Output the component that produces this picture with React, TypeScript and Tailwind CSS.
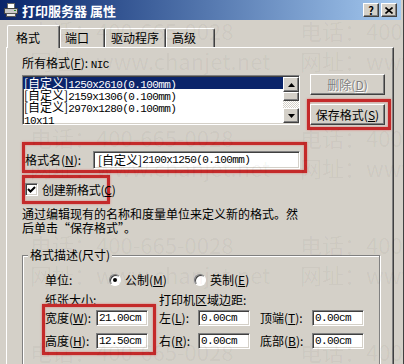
import React from 'react';

const raised =
  'border border-t-white border-l-white border-b-[#404040] border-r-[#404040] shadow-[inset_-1px_-1px_0_#808080,inset_1px_1px_0_#d4d0c8] bg-[#d4d0c8]';
const sunken =
  'border border-t-[#808080] border-l-[#808080] border-b-white border-r-white shadow-[inset_1px_1px_0_#404040,inset_-1px_-1px_0_#d4d0c8] bg-white';
const redBox = 'border-[3px] border-[#c42a2a] shadow-[0_0_2px_rgba(230,80,80,0.7),inset_0_0_2px_rgba(230,80,80,0.7)]';

// half-width latin run, 6px per char like the dialog's bitmap font
const M = ({ children }: { children: React.ReactNode }) => (
  <span className="font-['Liberation_Mono',monospace] text-[11px] tracking-[-0.6px]">{children}</span>
);

// label text with an underlined access key, e.g. 格式名(N)
const Label = ({ text, k, colon }: { text: string; k: string; colon?: boolean }) => (
  <span className="whitespace-nowrap">
    {text}(<span className="underline underline-offset-[1px]">{k}</span>){colon ? ':' : ''}
  </span>
);

const PrinterIcon = () => (
  <svg width="16" height="16" viewBox="0 0 16 16">
    <rect x="4.5" y="1.5" width="7" height="5" fill="#fff" stroke="#666" />
    <rect x="1.5" y="6.5" width="13" height="5" fill="#c8c8c8" stroke="#444" />
    <rect x="3.5" y="11.5" width="9" height="3" fill="#e8e8e8" stroke="#555" />
    <rect x="11" y="8" width="2" height="1" fill="#2a8a2a" />
  </svg>
);

const Field = ({ value }: { value: string }) => (
  <div className={`${sunken} w-[52px] h-[16px] flex items-center pl-[2px] leading-[12px]`}>
    <M>{value}</M>
  </div>
);

const Radio = ({ on }: { on?: boolean }) => (
  <span className="w-[12px] h-[12px] rounded-full border border-t-[#808080] border-l-[#808080] border-b-white border-r-white bg-white shadow-[inset_1px_1px_0_#404040] flex items-center justify-center">
    {on && <span className="w-[4px] h-[4px] rounded-full bg-black" />}
  </span>
);

const Arrow = ({ up }: { up?: boolean }) => (
  <div className={`${raised} h-[15px] flex items-center justify-center`}>
    <svg width="7" height="4" viewBox="0 0 7 4">
      <polygon points={up ? '3.5,0 7,4 0,4' : '0,0 7,0 3.5,4'} fill="#000" />
    </svg>
  </div>
);

const rows = [
  { name: '[自定义]', size: '1250x2610(0.100mm)' },
  { name: '[自定义]', size: '2159x1306(0.100mm)' },
  { name: '[自定义]', size: '2970x1280(0.100mm)' },
  { name: '', size: '10x11' },
];

const App: React.FC = () => {
  const phoneRows = [17, 124, 231, 338];
  const webRows = [47, 154, 261];
  return (
    <div className="relative w-[404px] h-[364px] overflow-hidden bg-[#d4d0c8] border-r border-r-[#404040] font-['Noto_Sans_CJK_SC','Liberation_Sans',sans-serif] text-[12px] leading-[14px] text-black">
      {/* title bar */}
      <div className="flex h-[20px] mr-[2px] items-center bg-linear-to-r from-[#0a246a] to-[#a6caf0] pl-[3px] pr-[4px]">
        <PrinterIcon />
        <span className="ml-[3px] text-[13px] font-bold text-white leading-none">打印服务器 属性</span>
        <div className="ml-auto flex gap-[2px]">
          <div className={`${raised} w-[16px] h-[14px] flex items-center justify-center text-[11px] font-bold leading-none`}>?</div>
          <div className={`${raised} w-[16px] h-[14px] flex items-center justify-center`}>
            <svg width="8" height="7" viewBox="0 0 8 7">
              <path d="M0.5 0.5 L7.5 6.5 M7.5 0.5 L0.5 6.5" stroke="#000" strokeWidth="1.6" />
            </svg>
          </div>
        </div>
      </div>

      <div className="pl-[6px] pt-[5px]">
        {/* tabs */}
        <div className="flex items-end h-[22px] pl-[1px]">
          <div className="relative z-10 -mb-[1px] w-[53px] h-[23px] bg-[#d4d0c8] border-t border-l border-white border-r border-r-[#404040] shadow-[inset_-1px_0_0_#808080] rounded-t-[2px] pl-[8px] pt-[5px]">
            格式
          </div>
          <div className="w-[45px] h-[19px] border-t border-l border-white border-r border-r-[#404040] shadow-[inset_-1px_0_0_#808080] rounded-t-[2px] pl-[4px] pt-[2px]">
            端口
          </div>
          <div className="w-[61px] h-[19px] border-t border-l border-white border-r border-r-[#404040] shadow-[inset_-1px_0_0_#808080] rounded-t-[2px] pl-[5px] pt-[2px]">
            驱动程序
          </div>
          <div className="w-[49px] h-[19px] border-t border-l border-white border-r border-r-[#404040] shadow-[inset_-1px_0_0_#808080] rounded-t-[2px] pl-[5px] pt-[2px]">
            高级
          </div>
        </div>

        {/* panel */}
        <div className="w-[388px] h-[340px] border-t border-l border-white border-r border-r-[#404040] shadow-[inset_-1px_0_0_#808080] pl-[15px] pt-[8px]">
          <div>
            <Label text="所有格式" k="F" colon /> <M>NIC</M>
          </div>

          <div className="flex items-start mt-[2px]">
            <div className={`${sunken} mt-[1px] w-[278px] h-[50px] flex`}>
              <div className="flex-1 pt-[1px] leading-[12px]">
                {rows.map((r, i) => (
                  <div key={i} className={`h-[12px] pl-[1px] whitespace-nowrap ${i === 0 ? 'bg-[#0a246a] text-white' : ''}`}>
                    {r.name}
                    <M>{r.size}</M>
                  </div>
                ))}
              </div>
              <div className="w-[16px] mt-[1px] flex flex-col">
                <Arrow up />
                <div className={`${raised} h-[9px]`} />
                <div className="h-[7px] bg-[image:repeating-conic-gradient(#fff_0_25%,#d4d0c8_0_50%)] bg-[length:2px_2px]" />
                <Arrow />
              </div>
            </div>

            <div className="ml-[10px] flex flex-col">
              <div className={`${raised} w-[75px] h-[21px] flex items-center justify-center text-[#808080] [text-shadow:1px_1px_0_#fff]`}>
                <Label text="删除" k="D" />
              </div>
              <div className={`${redBox} mt-[4px] -ml-[3px] pt-[2px] pb-[2px] pr-[3px]`}>
                <div className={`${raised} w-[75px] h-[21px] flex items-center justify-center`}>
                  <Label text="保存格式" k="S" />
                </div>
              </div>
            </div>
          </div>

          {/* format name */}
          <div className={`${redBox} mt-[12px] w-[285px] flex items-center pt-[6px] pb-[1px]`}>
            <div className="w-[68px]">
              <Label text="格式名" k="N" colon />
            </div>
            <div className={`${sunken} w-[207px] h-[18px] flex items-center pl-[4px] whitespace-nowrap`}>
              [自定义]<M>2100x1250(0.100mm)</M>
            </div>
          </div>

          {/* checkbox */}
          <div className={`${redBox} mt-[2px] w-[88px] h-[29px] flex items-center whitespace-nowrap`}>
            <div className={`${sunken} shrink-0 w-[13px] h-[13px] flex items-center justify-center`}>
              <svg width="9" height="9" viewBox="0 0 9 9">
                <path d="M1 4 L3.5 6.5 L8 2" fill="none" stroke="#000" strokeWidth="2" />
              </svg>
            </div>
            <span className="ml-[4px] tracking-[-0.3px]">
              <Label text="创建新格式" k="C" />
            </span>
          </div>

          <div className="mt-[3px]">
            通过编辑现有的名称和度量单位来定义新的格式。然
            <br />
            后单击“保存格式”。
          </div>

          {/* group box */}
          <div className="relative mt-[20px] w-[358px] h-[140px] border border-[#808080] shadow-[inset_1px_1px_0_#fff,1px_1px_0_#fff] pl-[22px] pt-[17px]">
            <span className="absolute -top-[8px] left-[5px] px-[2px] bg-[#d4d0c8]">格式描述(尺寸)</span>

            <div className="flex items-center h-[14px]">
              <span className="w-[64px]">单位:</span>
              <span className="w-[85px] flex items-center gap-[4px]">
                <Radio on />
                <Label text="公制" k="M" />
              </span>
              <span className="flex items-center gap-[4px]">
                <Radio />
                <Label text="英制" k="E" />
              </span>
            </div>

            <div className="flex mt-[6px]">
              <span className="w-[114px]">纸张大小:</span>
              <span>打印机区域边距:</span>
            </div>

            <div className="flex items-start -mt-[3px]">
              <div className={`${redBox} -ml-[3px] pt-[3px] pb-[3px] pr-[5px] grid grid-cols-[51px_52px] gap-y-[7px] items-center`}>
                <Label text="宽度" k="W" colon />
                <Field value="21.00cm" />
                <Label text="高度" k="H" colon />
                <Field value="12.50cm" />
              </div>
              <div className="ml-[3px] pt-[6px] grid grid-cols-[39px_52px] gap-y-[7px] items-center">
                <Label text="左" k="L" colon />
                <Field value="0.00cm" />
                <Label text="右" k="R" colon />
                <Field value="0.00cm" />
              </div>
              <div className="ml-[10px] pt-[6px] grid grid-cols-[52px_52px] gap-y-[7px] items-center">
                <Label text="顶端" k="T" colon />
                <Field value="0.00cm" />
                <Label text="底部" k="B" colon />
                <Field value="0.00cm" />
              </div>
            </div>
          </div>
        </div>
      </div>

      {/* faint watermark over the dialog */}
      <div className="pointer-events-none absolute inset-0 text-[22px] leading-[26px] text-black/[0.045] whitespace-nowrap">
        {phoneRows.map((y) => (
          <React.Fragment key={`p${y}`}>
            <span className="absolute left-[30px]" style={{ top: y }}>电话：400-665-0028</span>
            <span className="absolute left-[300px]" style={{ top: y }}>电话：400-665-0028</span>
          </React.Fragment>
        ))}
        {webRows.map((y) => (
          <React.Fragment key={`w${y}`}>
            <span className="absolute left-[30px]" style={{ top: y }}>网址：www.chanjet.net</span>
            <span className="absolute left-[300px]" style={{ top: y }}>网址：www.chanjet.net</span>
          </React.Fragment>
        ))}
      </div>
    </div>
  );
};

export default App;
